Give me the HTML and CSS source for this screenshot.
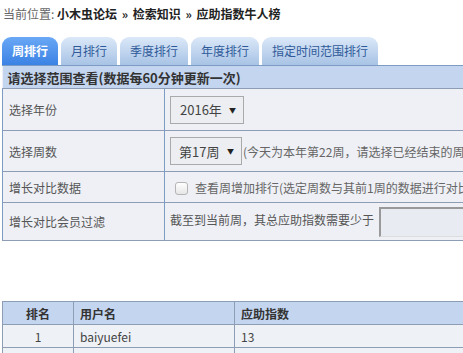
FILE: index.html
```html
<!DOCTYPE html>
<html lang="zh">
<head>
<meta charset="utf-8">
<link rel="stylesheet" href="styles.css">
</head>
<body>
<div class="page">
  <div class="crumb"><span class="crumb-label">当前位置:</span> <b>小木虫论坛</b> <b class="sep">»</b> <b>检索知识</b> <b class="sep">»</b> <b>应助指数牛人榜</b></div>
  <div class="tabs">
    <span class="tab active">周排行</span>
    <span class="tab">月排行</span>
    <span class="tab">季度排行</span>
    <span class="tab">年度排行</span>
    <span class="tab">指定时间范围排行</span>
  </div>
  <table class="form">
    <tr class="head"><td colspan="2">请选择范围查看(数据每60分钟更新一次)</td></tr>
    <tr class="r1">
      <td class="lab">选择年份</td>
      <td class="val"><span class="sel">2016年<i class="arr">▼</i></span></td>
    </tr>
    <tr class="r2">
      <td class="lab">选择周数</td>
      <td class="val"><span class="sel sel-w">第17周<i class="arr">▼</i></span><span class="note">(今天为本年第22周，请选择已经结束的周数)</span></td>
    </tr>
    <tr class="r3">
      <td class="lab">增长对比数据</td>
      <td class="val"><span class="chk"></span><span class="chk-text">查看周增加排行(选定周数与其前1周的数据进行对比)</span></td>
    </tr>
    <tr class="r4">
      <td class="lab">增长对比会员过滤</td>
      <td class="val">截至到当前周，其总应助指数需要少于 <span class="inp"></span></td>
    </tr>
  </table>
  <table class="list">
    <tr class="lhead"><th class="c1">排名</th><th class="c2">用户名</th><th class="c3">应助指数</th></tr>
    <tr><td class="c1">1</td><td class="c2">baiyuefei</td><td class="c3">13</td></tr>
    <tr><td class="c1"></td><td class="c2"></td><td class="c3"></td></tr>
  </table>
</div>
</body>
</html>
```

FILE: styles.css
```css
html, body {
  margin: 0;
  padding: 0;
  overflow: hidden;
  background: #fff;
}
body {
  font-family: "Noto Sans CJK SC", "Noto Sans", sans-serif;
  font-size: 12px;
  color: #333;
}
.page {
  padding-left: 2px;
  width: 760px;
}
.crumb {
  height: 28px;
  line-height: 28px;
  padding-left: 1px;
  color: #222;
}
.crumb-label { color: #666; }
.crumb b { font-weight: bold; }
.crumb .sep { font-weight: bold; margin: 0 2px; }
.tabs {
  margin-top: 9px;
  height: 28px;
  display: flex;
  gap: 3px;
  border-bottom: 1px solid #7d9cc4;
}
.tab {
  display: block;
  height: 28px;
  line-height: 28px;
  padding: 0 10px;
  border-radius: 9px 9px 0 0;
  background: linear-gradient(#dbe8f8, #a8c3e5);
  color: #2f5a9a;
  font-size: 12px;
}
.tab.active {
  background: linear-gradient(#6aa8f6, #3b82e4);
  color: #fff;
  font-weight: bold;
}
.form {
  border-collapse: collapse;
  width: 740px;
  background: #eef0f5;
}
.form td {
  padding: 0;
  border-top: 1px solid #8d9db3;
}
.form .head td {
  background: #c3d5ef;
  height: 22px;
  font-size: 13px;
  font-weight: bold;
  color: #333;
  padding-left: 5px;
  border-top: 0;
}
.lab {
  width: 155px;
  padding-left: 6px !important;
  border-right: 1px solid #7d9cc4;
  border-left: 1px solid #7d9cc4;
  color: #555;
}
.val {
  padding-left: 5px !important;
  color: #555;
  white-space: nowrap;
}
.r1 td { height: 41px; }
.r2 td { height: 40px; }
.r3 td { height: 30px; }
.r4 td { height: 37px; border-bottom: 1px solid #8d9db3; }
.sel {
  display: inline-flex;
  align-items: center;
  justify-content: space-between;
  box-sizing: border-box;
  width: 74px;
  height: 28px;
  padding: 0 7px 0 9px;
  border: 1px solid #aaa;
  background: #eceef2;
  color: #444;
  font-size: 13px;
  vertical-align: middle;
}
.sel-w { width: 72px; padding-left: 8px; }
.arr { font-style: normal; font-size: 7px; color: #222; }
.note { vertical-align: middle; margin-left: 1px; color: #666; }
.chk {
  display: inline-block;
  box-sizing: border-box;
  width: 13px;
  height: 13px;
  margin: 0 7px 0 5px;
  border: 1px solid #b5b5b5;
  border-radius: 3px;
  background: linear-gradient(#fff, #e6e6e6);
  vertical-align: middle;
}
.chk-text { vertical-align: middle; color: #666; }
.inp {
  display: inline-block;
  box-sizing: border-box;
  width: 200px;
  height: 30px;
  margin-left: 2px;
  border-top: 2px solid #999;
  border-left: 2px solid #999;
  border-right: 1px solid #ddd;
  border-bottom: 1px solid #ddd;
  background: #e8ecf2;
  vertical-align: middle;
}
.list {
  margin-top: 60px;
  border-collapse: collapse;
  width: 740px;
}
.list th, .list td {
  height: 22px;
  padding: 0 6px;
  border: 1px solid #8d9db3;
  text-align: left;
  color: #444;
  font-size: 12px;
}
.list th {
  background: #c3d5ef;
  font-weight: bold;
  color: #333;
}
.list td { background: #eef1f5; }
.list .c1 { width: 58px; text-align: center; }
.list .c2 { width: 148px; }
```
